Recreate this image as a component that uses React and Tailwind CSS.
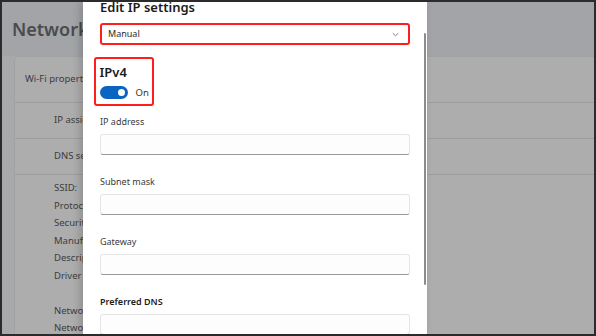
import React from "react";

const detailRows = [
  "SSID:",
  "Protocol:",
  "Security type:",
  "Manufacturer:",
  "Description:",
  "Driver version:",
  "",
  "Network band:",
  "Network channel:",
];

const fields = ["IP address", "Subnet mask", "Gateway"];

const Field = ({ label, bold }) => (
  <div className="flex flex-col mt-[21px] first:mt-[10px]">
    <p
      className={`h-[12px] leading-[12px] text-[9px] ${
        bold ? "font-semibold text-[#1b1b1b]" : "text-[#3a3a3a]"
      }`}
    >
      {label}
    </p>
    <div className="mt-[6px] w-[310px] h-[21px] shrink-0 bg-[#fdfdfd] border border-[#e6e6e6] border-b-[#9a9a9a] rounded-[3px]" />
  </div>
);

export default function App() {
  return (
    <div className="w-[596px] h-[336px] overflow-hidden bg-[#2b2b2b] p-[2px] font-['Noto_Sans',sans-serif]">
      <div className="relative w-full h-full overflow-hidden bg-[#a8a9ab] flex flex-col">
        {/* Settings page behind the dialog */}
        <div className="h-[54px] shrink-0 bg-[#a2a4a8] flex items-center pl-[10px] pt-[1px]">
          <h1 className="text-[18px] font-semibold text-[#4a4b4d]">Network</h1>
        </div>
        <div className="flex-1 pl-[12px]">
          <div className="h-full bg-[#adadae] rounded-tl-[5px] border-l border-t border-[#a2a2a3] text-[9.5px] text-[#3c3c3c]">
            <div className="h-[46px] flex items-center pl-[10px] border-b border-[#9d9d9e]">
              Wi-Fi properties
            </div>
            <div className="h-[36px] flex items-center pl-[39px] border-b border-[#9d9d9e]">
              IP assignment:
            </div>
            <div className="h-[36px] flex items-center pl-[39px] border-b border-[#9d9d9e]">
              DNS server assignment:
            </div>
            <div className="pl-[39px] pt-[4px] leading-[17.5px]">
              {detailRows.map((row, i) => (
                <p key={i} className="h-[17.5px]">
                  {row}
                </p>
              ))}
            </div>
          </div>
        </div>

        {/* Edit IP settings dialog */}
        <div className="absolute left-[81px] top-0 bottom-0 w-[344px] bg-white shadow-[-3px_0_8px_rgba(0,0,0,0.18)] pl-[17px] flex flex-col">
          <h2 className="-mt-[3px] h-[16px] leading-[16px] text-[13px] font-semibold text-[#1b1b1b]">
            Edit IP settings
          </h2>

          <div className="mt-[8px] w-[310px] h-[22px] shrink-0 border-[2.5px] border-[#ff1e1e] rounded-[3px] flex items-center justify-between pl-[6px] pr-[9px]">
            <span className="text-[9px] text-[#2b2b2b]">Manual</span>
            <svg width="7" height="5" viewBox="0 0 7 5" fill="none">
              <path d="M0.8 1.2 L3.5 3.8 L6.2 1.2" stroke="#7a7a7a" strokeWidth="1" />
            </svg>
          </div>

          <div className="mt-[12px] -ml-[6px] w-[60px] h-[49px] shrink-0 border-[2.5px] border-[#ff1e1e] rounded-[3px] pl-[3.5px] pt-[5px] flex flex-col">
            <p className="h-[16px] leading-[16px] text-[13px] font-semibold text-[#1b1b1b]">IPv4</p>
            <div className="mt-[6px] flex items-center gap-[8px]">
              <div className="w-[28px] h-[13px] rounded-full bg-[#0a64c2] flex items-center justify-end pr-[3px]">
                <div className="w-[7px] h-[7px] rounded-full bg-white" />
              </div>
              <span className="text-[9.5px] leading-[12px] text-[#333]">On</span>
            </div>
          </div>

          <div className="flex flex-col">
            {fields.map((f) => (
              <Field key={f} label={f} />
            ))}
            <Field label="Preferred DNS" bold />
          </div>

          {/* scrollbar */}
          <div className="absolute left-[341px] top-[31px] w-[1.5px] h-[252px] bg-[#8c8c8c] rounded-full" />
        </div>
      </div>
    </div>
  );
}
